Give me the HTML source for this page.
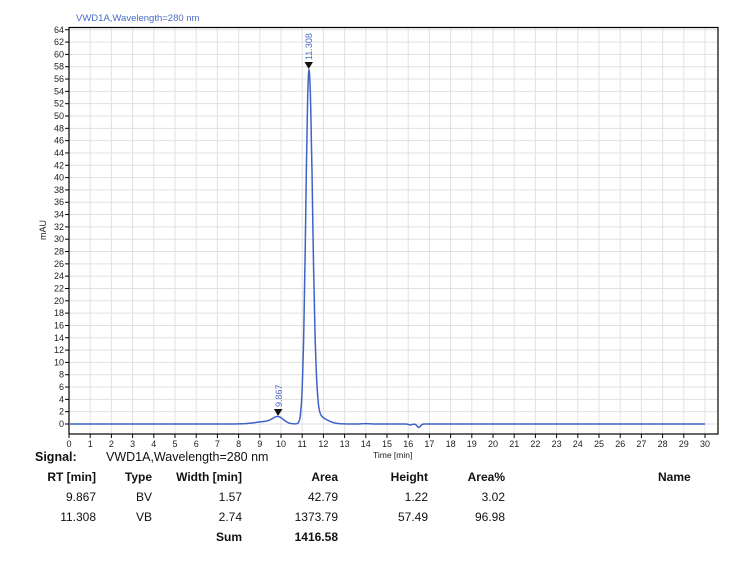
<!DOCTYPE html>
<html><head><style>
body{margin:0;width:746px;height:568px;background:#fff;overflow:hidden;font-family:"Liberation Sans",Arial,sans-serif}
svg{position:absolute;left:0;top:0}
.t{position:absolute;font-size:12px;color:#111;white-space:nowrap}
.b{font-weight:bold}
.r{text-align:right}
</style></head><body>
<svg width="746" height="568" xmlns="http://www.w3.org/2000/svg">
<g id="grid" stroke="#e0e0e0" stroke-width="1"></g>
<rect x="69" y="27.5" width="649" height="406.5" fill="none" stroke="#000" stroke-width="1.2"/>
<g id="ax" stroke="#000" stroke-width="1"></g>
<g id="lab" font-family="Liberation Sans,Arial,sans-serif" font-size="9" fill="#222"></g>
<path id="tr" fill="none" stroke="#3e62c8" stroke-width="1.5" stroke-linejoin="round"/>
<polygon points="304.5,62 313,62 308.7,69" fill="#111"/>
<polygon points="274,409 282.5,409 278,416" fill="#111"/>
<text x="76" y="21" font-family="Liberation Sans,Arial,sans-serif" font-size="9.5" fill="#4a6cc8">VWD1A,Wavelength=280 nm</text>
<text transform="translate(312,60) rotate(-90)" font-family="Liberation Sans,Arial,sans-serif" font-size="9" fill="#4a6cc8">11.308</text>
<text transform="translate(282,407) rotate(-90)" font-family="Liberation Sans,Arial,sans-serif" font-size="9" fill="#4a6cc8">9.867</text>
<text transform="translate(46,240) rotate(-90)" font-family="Liberation Sans,Arial,sans-serif" font-size="9" fill="#222">mAU</text>
<text x="373" y="458" font-family="Liberation Sans,Arial,sans-serif" font-size="8.5" fill="#222">Time [min]</text>
</svg>
<div class="t b" style="left:35px;top:450px;font-size:12.5px">Signal:</div>
<div class="t" style="left:106px;top:450px;font-size:12.5px">VWD1A,Wavelength=280 nm</div>
<div class="t b r" style="left:0;width:96px;top:470px">RT [min]</div>
<div class="t b r" style="left:100px;width:52px;top:470px">Type</div>
<div class="t b r" style="left:160px;width:82px;top:470px">Width [min]</div>
<div class="t b r" style="left:250px;width:88px;top:470px">Area</div>
<div class="t b r" style="left:340px;width:88px;top:470px">Height</div>
<div class="t b r" style="left:430px;width:75px;top:470px">Area%</div>
<div class="t b" style="left:658px;top:470px">Name</div>
<div class="t r" style="left:0;width:96px;top:490px">9.867</div>
<div class="t r" style="left:100px;width:52px;top:490px">BV</div>
<div class="t r" style="left:160px;width:82px;top:490px">1.57</div>
<div class="t r" style="left:250px;width:88px;top:490px">42.79</div>
<div class="t r" style="left:340px;width:88px;top:490px">1.22</div>
<div class="t r" style="left:430px;width:75px;top:490px">3.02</div>
<div class="t r" style="left:0;width:96px;top:510px">11.308</div>
<div class="t r" style="left:100px;width:52px;top:510px">VB</div>
<div class="t r" style="left:160px;width:82px;top:510px">2.74</div>
<div class="t r" style="left:250px;width:88px;top:510px">1373.79</div>
<div class="t r" style="left:340px;width:88px;top:510px">57.49</div>
<div class="t r" style="left:430px;width:75px;top:510px">96.98</div>
<div class="t b r" style="left:160px;width:82px;top:530px">Sum</div>
<div class="t b r" style="left:250px;width:88px;top:530px">1416.58</div>
<script>
var X=t=>69+21.2*t,Y=v=>424-6.16*v,NS="http://www.w3.org/2000/svg";
function el(p,n,a,txt){var e=document.createElementNS(NS,n);for(var k in a)e.setAttribute(k,a[k]);if(txt!=null)e.textContent=txt;document.getElementById(p).appendChild(e);}
for(var t=1;t<=30;t++)el("grid","line",{x1:X(t),x2:X(t),y1:28,y2:434});
for(var v=-4;v<=64;v+=2)if(Y(v)<434&&Y(v)>28)el("grid","line",{x1:69,x2:718,y1:Y(v),y2:Y(v)});
for(var t=0;t<=30;t++){el("ax","line",{x1:X(t),x2:X(t),y1:434,y2:438});el("lab","text",{x:X(t),y:447,"text-anchor":"middle"},t);}
for(var v=0;v<=64;v+=2){el("ax","line",{x1:65,x2:69,y1:Y(v),y2:Y(v)});el("lab","text",{x:64,y:Y(v)+3,"text-anchor":"end"},v);}
function g(t,c,s,a){return a*Math.exp(-(t-c)*(t-c)/(2*s*s));}
function f(t){
 var v=g(t,9.87,0.25,1.0)+g(t,9.3,0.5,0.4);
 v+= t<11.32? g(t,11.32,0.15,57.5): g(t,11.32,0.17,57.5);
 if(t>11.5) v+=1.5*Math.exp(-(t-11.6)*(t-11.6)/(2*0.45*0.45))*Math.min(1,(t-11.5)/0.2);
 v+=g(t,14,0.15,0.06)+g(t,16.1,0.08,-0.15)+g(t,16.5,0.08,-0.55);
 return v;}
var d="";for(var t=0;t<=30.0001;t+=0.02){d+=(d?" L":"M")+X(t).toFixed(1)+","+Y(f(t)).toFixed(1);}
document.getElementById("tr").setAttribute("d",d);
</script>
</body></html>
